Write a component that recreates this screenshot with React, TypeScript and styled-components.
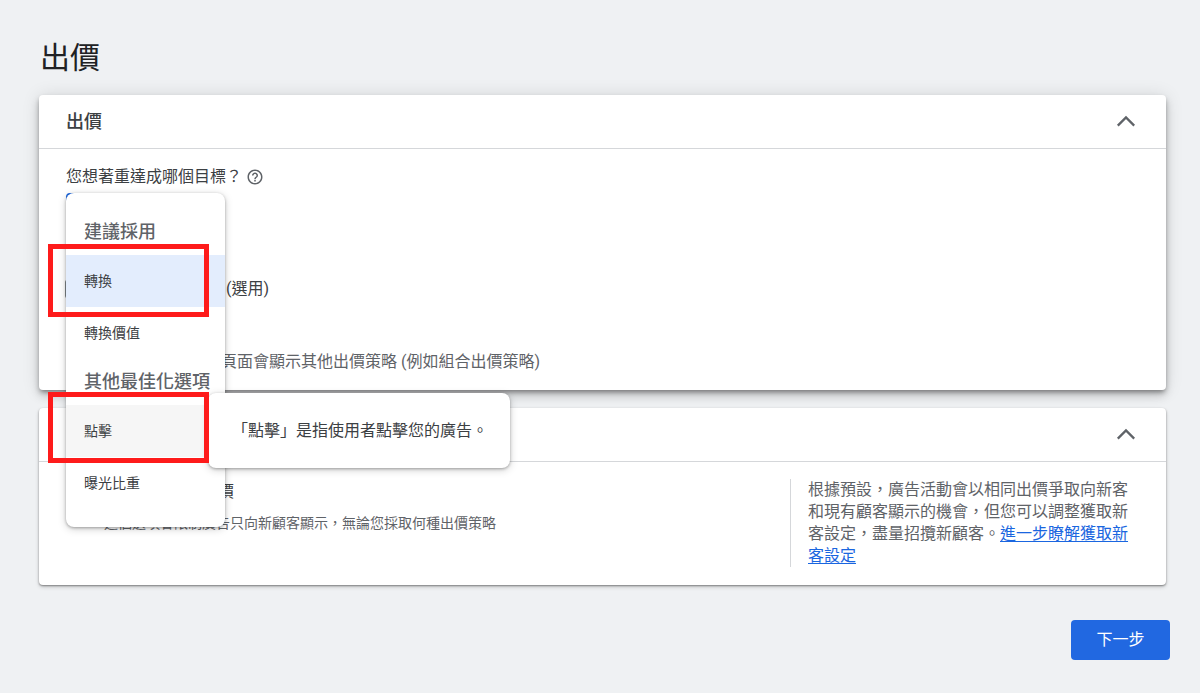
import React from "react";
import styled, { createGlobalStyle, css } from "styled-components";

const GlobalStyle = createGlobalStyle`
  *, *::before, *::after { box-sizing: border-box; }
  body {
    margin: 0;
    background: #eff1f3;
    color: #3c4043;
    font-family: Roboto, "Noto Sans CJK TC", sans-serif;
    font-size: 16px;
    line-height: 24px;
  }
  button, input { font: inherit; margin: 0; }
`;

const Page = styled.main`
  display: flex;
  flex-direction: column;
  padding: 36px 34px 32px 39px;
`;

const PageTitle = styled.h1`
  margin: 0 0 15px 1px;
  font-size: 30px;
  line-height: 44px;
  font-weight: 400;
  color: #202124;
`;

const Card = styled.section<{ $raised?: boolean }>`
  background: #fff;
  border-radius: 4px;
  margin-bottom: 18px;
  ${({ $raised }) =>
    $raised
      ? css`
          position: relative;
          z-index: 1;
          box-shadow: 0 3px 5px -1px rgba(0, 0, 0, 0.4),
            0 6px 10px rgba(0, 0, 0, 0.14), 0 1px 18px rgba(0, 0, 0, 0.12);
        `
      : css`
          box-shadow: 0 1px 2px rgba(0, 0, 0, 0.4),
            0 2px 4px rgba(0, 0, 0, 0.16);
        `}
`;

const CardHeader = styled.header`
  display: flex;
  align-items: center;
  justify-content: space-between;
  height: 54px;
  padding: 0 26px 0 27px;
  border-bottom: 1px solid #d5d7da;
`;

const CardTitle = styled.h2`
  margin: 0;
  font-size: 18px;
  line-height: 24px;
  font-weight: 500;
`;

const IconButton = styled.button`
  display: flex;
  align-items: center;
  justify-content: center;
  padding: 0;
  border: 0;
  background: none;
  color: #5f6368;
  cursor: pointer;
`;

const ToggleButton = styled(IconButton)`
  width: 28px;
  height: 28px;
`;

const BidBody = styled.div`
  padding: 16px 27px;
`;

const QuestionRow = styled.div`
  display: flex;
  align-items: center;
  gap: 4px;
  margin-bottom: 4px;
`;

const SelectArea = styled.div`
  position: relative;
  width: 159px;
  margin-bottom: 36px;
`;

const SelectTrigger = styled.button`
  display: block;
  width: 150px;
  height: 48px;
  padding: 0 16px;
  border: 2px solid #1a66e0;
  border-radius: 4px;
  background: #fff;
  color: inherit;
  text-align: left;
`;

const Menu = styled.div`
  position: absolute;
  top: 0;
  left: 0;
  width: 100%;
  padding: 16px 0 18px;
  border-radius: 8px;
  background: #fff;
  box-shadow: 0 1px 3px rgba(0, 0, 0, 0.3), 0 2px 8px rgba(0, 0, 0, 0.18);
`;

const MenuHeading = styled.div`
  display: flex;
  align-items: center;
  height: 46px;
  padding-left: 18px;
  font-size: 18px;
  font-weight: 500;
  color: #5f6368;
  white-space: nowrap;
`;

const MenuItem = styled.div`
  position: relative;
`;

const Option = styled.button<{ $tone?: "selected" | "hovered" }>`
  display: block;
  width: 100%;
  height: 52px;
  padding: 0 18px;
  border: 0;
  background: ${({ $tone }) =>
    $tone === "selected" ? "#e3edfd" : $tone === "hovered" ? "#f6f6f6" : "#fff"};
  color: #3c4043;
  font-size: 14px;
  text-align: left;
  cursor: pointer;
`;

const Highlight = styled.span<{ $above: number; $below: number }>`
  position: absolute;
  z-index: 2;
  top: -${({ $above }) => $above}px;
  right: 16px;
  bottom: -${({ $below }) => $below}px;
  left: -18px;
  border: 5px solid #fe1b1b;
  pointer-events: none;
`;

const Tooltip = styled.div`
  position: absolute;
  z-index: 1;
  top: -12px;
  left: 142px;
  display: flex;
  align-items: center;
  height: 75px;
  padding: 0 22px 0 24px;
  border-radius: 8px;
  background: #fff;
  box-shadow: 0 1px 3px rgba(0, 0, 0, 0.3), 0 2px 8px rgba(0, 0, 0, 0.18);
  white-space: nowrap;
`;

const CheckRow = styled.div<{ $gap: number; $outdent?: boolean }>`
  display: flex;
  align-items: center;
  gap: ${({ $gap }) => $gap}px;
  margin-left: ${({ $outdent }) => ($outdent ? "-1px" : "0")};
`;

const Checkbox = styled.input`
  appearance: none;
  flex: none;
  width: 18px;
  height: 18px;
  border: 2px solid #80868b;
  border-radius: 2px;
  background: #fff;
`;

const Note = styled.p`
  margin: 49px 0 0;
  color: #5f6368;
`;

const CustomerBody = styled.div`
  display: flex;
  justify-content: space-between;
  padding: 17px 27px 18px;
`;

const CustomerOption = styled.div`
  padding-top: 1px;
`;

const Hint = styled.p`
  margin: 9px 0 0 38px;
  font-size: 14px;
  line-height: 20px;
  color: #5f6368;
`;

const Aside = styled.aside`
  flex: none;
  width: 349px;
  padding-left: 17px;
  border-left: 1px solid #d5d7da;
  line-height: 22px;
  color: #5f6368;
`;

const Link = styled.a`
  color: #1a66e0;
  text-decoration: underline;
  text-underline-offset: 2px;
`;

const Actions = styled.div`
  display: flex;
  justify-content: flex-end;
  margin: 17px -4px 0 0;
`;

const NextButton = styled.button`
  min-width: 99px;
  height: 40px;
  padding: 0 24px;
  border: 0;
  border-radius: 4px;
  background: #2168e1;
  color: #fff;
  cursor: pointer;
`;

function Chevron() {
  return (
    <svg width="20" height="14" viewBox="0 0 20 14" fill="none" aria-hidden="true">
      <path d="M1.8 10.6 10 2.4l8.2 8.2" stroke="currentColor" strokeWidth="2.3" />
    </svg>
  );
}

function HelpIcon() {
  return (
    <svg width="18" height="18" viewBox="0 0 24 24" fill="currentColor" aria-hidden="true">
      <path d="M11 18h2v-2h-2v2zm1-16C6.48 2 2 6.48 2 12s4.48 10 10 10 10-4.48 10-10S17.52 2 12 2zm0 18c-4.41 0-8-3.59-8-8s3.59-8 8-8 8 3.59 8 8-3.59 8-8 8zm0-14c-2.21 0-4 1.79-4 4h2c0-1.1.9-2 2-2s2 .9 2 2c0 2-3 1.75-3 5h2c0-2.25 3-2.5 3-5 0-2.21-1.79-4-4-4z" />
    </svg>
  );
}

export default function App() {
  return (
    <Page lang="zh-TW">
      <GlobalStyle />
      <PageTitle>出價</PageTitle>

      <Card $raised>
        <CardHeader>
          <CardTitle>出價</CardTitle>
          <ToggleButton type="button" aria-label="收合出價">
            <Chevron />
          </ToggleButton>
        </CardHeader>
        <BidBody>
          <QuestionRow>
            <span id="goal-label">您想著重達成哪個目標？</span>
            <IconButton type="button" aria-label="說明">
              <HelpIcon />
            </IconButton>
          </QuestionRow>
          <SelectArea>
            <SelectTrigger type="button" aria-haspopup="listbox" aria-labelledby="goal-label" />
            <Menu role="listbox" aria-labelledby="goal-label">
              <MenuHeading>建議採用</MenuHeading>
              <MenuItem>
                <Option type="button" role="option" aria-selected="true" $tone="selected">
                  轉換
                </Option>
                <Highlight $above={11} $below={10} />
              </MenuItem>
              <MenuItem>
                <Option type="button" role="option">轉換價值</Option>
              </MenuItem>
              <MenuHeading>其他最佳化選項</MenuHeading>
              <MenuItem>
                <Option type="button" role="option" $tone="hovered">
                  點擊
                </Option>
                <Tooltip role="tooltip">「點擊」是指使用者點擊您的廣告。</Tooltip>
                <Highlight $above={13} $below={6} />
              </MenuItem>
              <MenuItem>
                <Option type="button" role="option">曝光比重</Option>
              </MenuItem>
            </Menu>
          </SelectArea>
          <CheckRow $gap={11} $outdent>
            <Checkbox type="checkbox" id="target-cpa" />
            <label htmlFor="target-cpa">目標單次動作出價 (選用)</label>
          </CheckRow>
          <Note>建立完成之後，(設定)頁面會顯示其他出價策略 (例如組合出價策略)</Note>
        </BidBody>
      </Card>

      <Card>
        <CardHeader>
          <CardTitle>獲取新客</CardTitle>
          <ToggleButton type="button" aria-label="收合獲取新客">
            <Chevron />
          </ToggleButton>
        </CardHeader>
        <CustomerBody>
          <CustomerOption>
            <CheckRow $gap={22}>
              <Checkbox type="checkbox" id="new-customers" />
              <label htmlFor="new-customers">只針對新顧客出價</label>
            </CheckRow>
            <Hint>這個選項會限制廣告只向新顧客顯示，無論您採取何種出價策略</Hint>
          </CustomerOption>
          <Aside>
            根據預設，廣告活動會以相同出價爭取向新客和現有顧客顯示的機會，但您可以調整獲取新客設定，盡量招攬新顧客。<Link href="#">進一步瞭解獲取新客設定</Link>
          </Aside>
        </CustomerBody>
      </Card>

      <Actions>
        <NextButton type="button">下一步</NextButton>
      </Actions>
    </Page>
  );
}
